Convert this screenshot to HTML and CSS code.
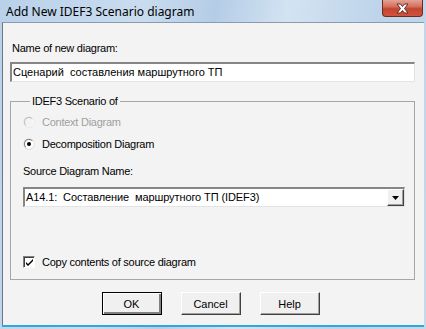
FILE: index.html
```html
<!DOCTYPE html>
<html lang="en">
<head>
    <meta charset="UTF-8">
    <title>Add New IDEF3 Scenario diagram</title>
    <link rel="stylesheet" href="styles.css">
</head>
<body>
    <div class="window">
        <div class="titlebar">
            <span class="title">Add New IDEF3 Scenario diagram</span>
            <div class="close-btn">
                <svg width="17" height="11" viewBox="0 0 17 11">
                    <path d="M3 1 L6.5 1 L8.5 3.5 L10.5 1 L14 1 L10.5 5.5 L14 10 L10.5 10 L8.5 7.5 L6.5 10 L3 10 L6.5 5.5 Z" fill="#ffffff" stroke="#5a2a26" stroke-width="1"/>
                </svg>
            </div>
        </div>

        <div class="client">
            <div class="label name-label">Name of new diagram:</div>
            <div class="textbox">Сценарий&nbsp; составления маршрутного ТП</div>

            <fieldset class="group">
                <legend>IDEF3 Scenario of</legend>

                <div class="option disabled">
                    <span class="radio"></span>
                    <span>Context Diagram</span>
                </div>
                <div class="option">
                    <span class="radio checked"></span>
                    <span>Decomposition Diagram</span>
                </div>

                <div class="label source-label">Source Diagram Name:</div>
                <div class="combo">
                    <span class="combo-text">A14.1:&nbsp; Составление&nbsp; маршрутного ТП (IDEF3)</span>
                    <span class="combo-btn">
                        <svg width="7" height="4" viewBox="0 0 7 4"><path d="M0 0 H7 L3.5 4 Z" fill="#000"/></svg>
                    </span>
                </div>

                <div class="option copy-row">
                    <span class="checkbox">
                        <svg width="9" height="9" viewBox="0 0 9 9"><path d="M1 4 L3 6 L8 1 L8 3 L3 8 L1 6 Z" fill="#000"/></svg>
                    </span>
                    <span>Copy contents of source diagram</span>
                </div>
            </fieldset>

            <div class="buttons">
                <button class="btn default">OK</button>
                <button class="btn">Cancel</button>
                <button class="btn">Help</button>
            </div>
        </div>
        <div class="bottom-edge"></div>
    </div>
</body>
</html>
```

FILE: styles.css
```css
body {
    margin: 0;
    background: #1a1a1a;
}

.window {
    width: 426px;
    height: 329px;
    background: linear-gradient(100deg, #b9d1ea 0%, #c9dcef 30%, #b4cde6 45%, #d3e3f2 60%, #bcd3ea 80%, #c6d9ec 100%);
    display: flex;
    flex-direction: column;
    overflow: hidden;
}

.titlebar {
    height: 22px;
    display: flex;
    align-items: flex-start;
    justify-content: space-between;
}

.title {
    margin: 4px 0 0 6px;
    font-family: "Noto Sans", sans-serif;
    font-size: 12px;
    line-height: 15px;
    color: #000;
}

.close-btn {
    width: 41px;
    height: 17px;
    margin-right: 3px;
    box-sizing: border-box;
    border: 1px solid #6d2a23;
    border-top: none;
    border-radius: 0 0 4px 4px;
    background: linear-gradient(#e3a394 0%, #d4725f 40%, #c4442f 55%, #d2533d 100%);
    display: flex;
    align-items: center;
    justify-content: center;
}

.client {
    height: 303px;
    margin: 0 2px 0 2px;
    box-sizing: border-box;
    border-left: 1px solid #6a7785;
    border-top: 1px solid #8a9bab;
    background: #f3f3f3;
    padding: 19px 9px 0 7px;
    font-family: "Liberation Sans", Arial, sans-serif;
    font-size: 11px;
    letter-spacing: -0.25px;
    color: #000;
}

.label {
    line-height: 13px;
    padding-left: 2px;
}

.textbox {
    margin-top: 7px;
    height: 20px;
    box-sizing: border-box;
    background: #fff;
    border: 1px solid #e3e3e3;
    border-top: 2px solid #868686;
    border-left: 2px solid #868686;
    padding: 2px 0 0 1px;
    line-height: 13px;
    letter-spacing: 0;
    white-space: nowrap;
}

.group {
    margin: 13px 0 0 0;
    padding: 0 9px 9px 12px;
    border: 1px solid #a6a6a6;
    min-width: 0;
}

.group legend {
    padding: 0 2px;
    margin-left: 7px;
    line-height: 13px;
}

.option {
    display: flex;
    align-items: center;
    height: 16px;
    gap: 8px;
    margin-top: 6px;
}

.option.disabled {
    color: #a0a0a0;
}

.radio {
    width: 10px;
    height: 10px;
    margin-left: 1px;
    box-sizing: border-box;
    border-radius: 50%;
    border: 1px solid;
    border-color: #808080 #ffffff #ffffff #808080;
    background: #fff;
    box-shadow: 0 0 0 0.5px #c8c8c8;
    display: flex;
    align-items: center;
    justify-content: center;
}

.option.disabled .radio {
    background: #f3f3f3;
    border-color: #c0c0c0 #fff #fff #c0c0c0;
    box-shadow: 0 0 0 0.5px #dcdcdc;
}

.radio.checked::after {
    content: "";
    width: 4px;
    height: 4px;
    border-radius: 50%;
    background: #000;
}

.source-label {
    margin-top: 13px;
    padding-left: 0;
}

.combo {
    margin-top: 9px;
    height: 20px;
    box-sizing: border-box;
    background: #fff;
    border: 1px solid #e3e3e3;
    border-top: 2px solid #868686;
    border-left: 2px solid #868686;
    display: flex;
    align-items: stretch;
}

.combo-text {
    flex: 1;
    padding: 2px 0 0 1px;
    line-height: 13px;
    letter-spacing: -0.1px;
    white-space: nowrap;
}

.combo-btn {
    width: 17px;
    box-sizing: border-box;
    background: #f0f0f0;
    border: 1px solid;
    border-color: #fff #404040 #404040 #fff;
    box-shadow: inset -1px -1px 0 #a0a0a0;
    display: flex;
    align-items: center;
    justify-content: center;
}

.copy-row {
    margin-top: 47px;
    gap: 7px;
}

.checkbox {
    width: 12px;
    height: 12px;
    box-sizing: border-box;
    background: #fff;
    border: 1px solid;
    border-color: #808080 #fff #fff #808080;
    box-shadow: inset 1px 1px 0 #404040;
    display: flex;
    align-items: center;
    justify-content: center;
    padding: 1px 0 0 1px;
}

.buttons {
    margin-top: 12px;
    display: flex;
    justify-content: center;
    gap: 19px;
    padding-right: 4px;
}

.btn {
    width: 60px;
    height: 23px;
    box-sizing: border-box;
    font-family: "Liberation Sans", Arial, sans-serif;
    font-size: 11px;
    color: #000;
    background: #f0f0f0;
    border: 1px solid;
    border-color: #fff #404040 #404040 #fff;
    box-shadow: inset -1px -1px 0 #a0a0a0;
    padding: 0;
}

.btn.default {
    border: 1px solid #000;
    box-shadow: inset 1px 1px 0 #fff, inset -2px -2px 0 #808080;
}

.bottom-edge {
    height: 2px;
    margin: 0 2px;
    background: #2fa9d8;
}
```
